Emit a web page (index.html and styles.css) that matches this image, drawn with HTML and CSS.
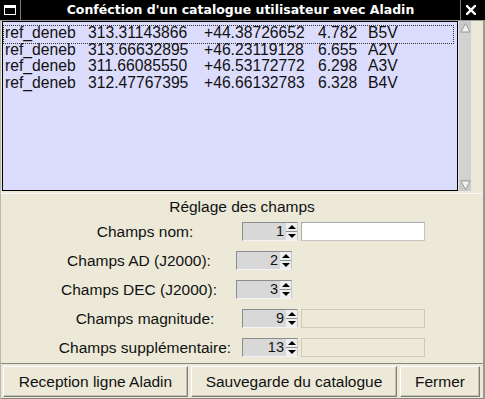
FILE: index.html
```html
<!DOCTYPE html>
<html lang="fr">

<head>
  <meta charset="UTF-8">
  <title>Confection d'un catalogue utilisateur avec Aladin</title>
  <link rel="stylesheet" href="styles.css">
</head>

<body>
  <div class="window">
    <div class="titlebar">
      <div class="tb-btn tb-left">
        <svg width="12" height="10" viewBox="0 0 12 10">
          <rect x="0.5" y="0.5" width="11" height="9" fill="none" stroke="#fff" stroke-width="1"/>
          <rect x="0" y="0" width="12" height="3" fill="#fff"/>
        </svg>
      </div>
      <div class="tb-title">Conféction d'un catalogue utilisateur avec Aladin</div>
      <div class="tb-btn tb-right">
        <svg width="10" height="10" viewBox="0 0 10 10">
          <path d="M1 1 L9 9 M9 1 L1 9" stroke="#fff" stroke-width="2.4" stroke-linecap="square"/>
        </svg>
      </div>
    </div>

    <div class="content">
      <div class="list-wrap">
        <div class="list">
          <div class="list-row focused">
            <span>ref_deneb</span><span>313.31143866</span><span>+44.38726652</span><span>4.782</span><span>B5V</span>
          </div>
          <div class="list-row">
            <span>ref_deneb</span><span>313.66632895</span><span>+46.23119128</span><span>6.655</span><span>A2V</span>
          </div>
          <div class="list-row">
            <span>ref_deneb</span><span>311.66085550</span><span>+46.53172772</span><span>6.298</span><span>A3V</span>
          </div>
          <div class="list-row">
            <span>ref_deneb</span><span>312.47767395</span><span>+46.66132783</span><span>6.328</span><span>B4V</span>
          </div>
        </div>
        <div class="scrollbar">
          <div class="sb-arrow">
            <svg width="11" height="11" viewBox="0 0 11 11">
              <path d="M5.5 1.5 L10 10 L1 10 Z" fill="#f2f2f2" stroke="#9a9a9a" stroke-width="1"/>
            </svg>
          </div>
          <div class="sb-track"></div>
          <div class="sb-arrow">
            <svg width="11" height="11" viewBox="0 0 11 11">
              <path d="M1 1 L10 1 L5.5 9.5 Z" fill="#f2f2f2" stroke="#9a9a9a" stroke-width="1"/>
            </svg>
          </div>
        </div>
      </div>

      <div class="settings">
        <div class="settings-title">Réglage des champs</div>

        <div class="field-row">
          <div class="field-label">Champs nom:</div>
          <div class="spinner">
            <div class="spin-value">1</div>
            <div class="spin-arrows"><span class="up"></span><span class="down"></span></div>
          </div>
          <div class="text-field"></div>
        </div>

        <div class="field-row narrow">
          <div class="field-label">Champs AD (J2000):</div>
          <div class="spinner">
            <div class="spin-value">2</div>
            <div class="spin-arrows"><span class="up"></span><span class="down"></span></div>
          </div>
        </div>

        <div class="field-row narrow">
          <div class="field-label">Champs DEC (J2000):</div>
          <div class="spinner">
            <div class="spin-value">3</div>
            <div class="spin-arrows"><span class="up"></span><span class="down"></span></div>
          </div>
        </div>

        <div class="field-row">
          <div class="field-label">Champs magnitude:</div>
          <div class="spinner">
            <div class="spin-value">9</div>
            <div class="spin-arrows"><span class="up"></span><span class="down"></span></div>
          </div>
          <div class="text-field disabled"></div>
        </div>

        <div class="field-row">
          <div class="field-label">Champs supplémentaire:</div>
          <div class="spinner">
            <div class="spin-value">13</div>
            <div class="spin-arrows"><span class="up"></span><span class="down"></span></div>
          </div>
          <div class="text-field disabled"></div>
        </div>
      </div>

      <div class="actions">
        <button class="btn btn-receive">Reception ligne Aladin</button>
        <button class="btn btn-save">Sauvegarde du catalogue</button>
        <button class="btn btn-close">Fermer</button>
      </div>
    </div>
  </div>
</body>

</html>
```

FILE: styles.css
```css
body {
  margin: 0;
  background-color: #ece9d8;
  font-family: "Liberation Sans", Arial, sans-serif;
  color: #111;
}

.window {
  width: 485px;
  height: 399px;
  overflow: hidden;
  background-color: #ece9d8;
}

.titlebar {
  display: flex;
  height: 20px;
  background-color: #000;
  border-bottom: 1px solid #9c9c9c;
}

.tb-btn {
  width: 20px;
  display: flex;
  justify-content: center;
  align-items: center;
}

.tb-left {
  border-right: 1px solid #7c7c7c;
}

.tb-right {
  border-left: 1px solid #7c7c7c;
  margin-right: 4px;
}

.tb-title {
  flex: 1;
  color: #fff;
  font-family: "DejaVu Sans", sans-serif;
  font-weight: bold;
  font-size: 12.5px;
  line-height: 20px;
  text-align: center;
}

.content {
  border-left: 1px solid #b8b8b8;
  border-right: 2px solid #9a988c;
}

.list-wrap {
  display: flex;
  height: 170px;
  margin-right: 12px;
  margin-left: 1px;
}

.list {
  flex: 1;
  background-color: #dcdcfc;
  border: 1px solid #000;
  padding: 3px 3px 0 0;
  font-size: 15.7px;
}

.list-row {
  position: relative;
  display: grid;
  grid-template-columns: 83px 116px 114px 50px auto;
  height: 16.67px;
  line-height: 16.67px;
  padding-left: 2px;
}

.list-row.focused::after {
  content: "";
  position: absolute;
  top: 0;
  bottom: -2px;
  left: 0;
  right: 0;
  border: 1px dotted #333;
}

.scrollbar {
  width: 12px;
  display: flex;
  flex-direction: column;
  background-color: #d2d2d2;
  border-left: 1px solid #e4e4e4;
}

.sb-arrow {
  height: 12px;
  display: flex;
  justify-content: center;
  align-items: center;
  background-color: #cacaca;
}

.sb-track {
  flex: 1;
}

.settings {
  margin-top: 2px;
  height: 160px;
  padding: 4px 0 5px 0;
  border-top: 1px solid #fafaf6;
  border-bottom: 1px solid #8a887c;
  display: flex;
  flex-direction: column;
  gap: 10px;
}

.settings-title {
  font-size: 15.5px;
  line-height: 18px;
  text-align: center;
  margin-bottom: -4px;
}

.field-row {
  display: flex;
  align-items: center;
  height: 19px;
  padding-left: 52px;
}

.field-row.narrow {
  padding-left: 46px;
}

.field-label {
  width: 184px;
  margin-right: 5px;
  text-align: center;
  font-size: 15.5px;
  white-space: nowrap;
}

.spinner {
  display: flex;
  width: 56px;
  height: 19px;
  box-sizing: border-box;
  border-top: 1px solid #8c8c8c;
  border-left: 1px solid #8c8c8c;
  border-bottom: 1px solid #f4f4f4;
  border-right: 1px solid #c8c8c8;
}

.spin-value {
  flex: 1;
  background-color: #d8d8d8;
  text-align: right;
  font-size: 14.5px;
  line-height: 17px;
  padding-right: 2px;
}

.spin-arrows {
  width: 11px;
  display: flex;
  flex-direction: column;
  gap: 1px;
  background-color: #8c8c8c;
}

.spin-arrows span {
  flex: 1;
  background-color: #eeeeee;
  display: flex;
  justify-content: center;
  align-items: center;
}

.spin-arrows .up::before {
  content: "";
  border-left: 4px solid transparent;
  border-right: 4px solid transparent;
  border-bottom: 4px solid #000;
}

.spin-arrows .down::before {
  content: "";
  border-left: 4px solid transparent;
  border-right: 4px solid transparent;
  border-top: 4px solid #000;
}

.text-field {
  width: 124px;
  height: 19px;
  margin-left: 3px;
  box-sizing: border-box;
  background-color: #fff;
  border: 1px solid #c4c4c4;
  border-top-color: #a8a8a8;
  border-left-color: #a8a8a8;
}

.text-field.disabled {
  background-color: #ece9d8;
  border-color: #cdcabb;
}

.actions {
  display: flex;
  gap: 3px;
  padding: 2px 3px 1px 2px;
  border-bottom: 1px solid #8a887c;
}

.btn {
  height: 31px;
  background-color: #ece9d8;
  font-family: "Liberation Sans", Arial, sans-serif;
  font-size: 15.5px;
  color: #111;
  border: 1px solid;
  border-color: #fff #7e7c72 #7e7c72 #fff;
  box-shadow: inset -1px -1px 0 #c4c1b2;
  padding: 0;
  cursor: pointer;
}

.btn-receive {
  width: 185px;
}

.btn-save {
  width: 206px;
}

.btn-close {
  width: 80px;
}
```
